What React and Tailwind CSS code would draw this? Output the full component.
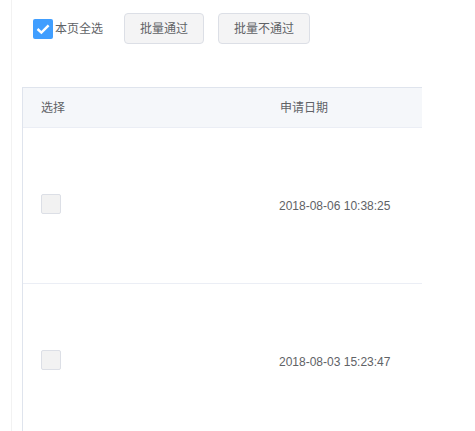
import React, { useState } from "react";

const rows = [
  { id: 1, date: "2018-08-06 10:38:25" },
  { id: 2, date: "2018-08-03 15:23:47" },
];

function Check({ checked, onClick }) {
  return checked ? (
    <span
      onClick={onClick}
      className="flex h-[20px] w-[20px] shrink-0 items-center justify-center rounded-[2px] bg-[#409eff]"
    >
      <svg width="16" height="16" viewBox="0 0 16 16">
        <path d="M2.5 8 L6.4 11.6 L13.6 4.4" fill="none" stroke="#fff" strokeWidth="2.4" />
      </svg>
    </span>
  ) : (
    <span
      onClick={onClick}
      className="block h-[20px] w-[20px] shrink-0 rounded-[2px] border border-[#dcdfe6] bg-[#f2f2f2]"
    />
  );
}

export default function App() {
  const [all, setAll] = useState(true);
  const [sel, setSel] = useState([]);

  return (
    <div
      className="min-h-[431px] bg-white text-[12px] text-[#606266]"
      style={{ fontFamily: '"Liberation Sans", "Noto Sans CJK SC", sans-serif' }}
    >
      <div className="ml-[11px] min-h-[431px] border-l border-[#f2f2f2] pl-[10px]">
        {/* toolbar */}
        <div className="flex items-center pt-[13px] pl-[11px]">
          <label className="flex items-center gap-[2px]">
            <Check checked={all} onClick={() => setAll(!all)} />
            <span>本页全选</span>
          </label>
          <button className="ml-[21px] h-[31px] w-[80px] rounded-[4px] border border-[#dcdfe6] bg-[#f4f4f5]">
            批量通过
          </button>
          <button className="ml-[14px] h-[31px] w-[92px] rounded-[4px] border border-[#dcdfe6] bg-[#f4f4f5]">
            批量不通过
          </button>
        </div>

        {/* table */}
        <div className="mt-[43px] w-[400px] border-l border-t border-[#dfe4ed]">
          <div className="flex h-[40px] items-center border-b border-[#ebeef5] bg-[#f5f7fa]">
            <div className="w-[238px] pl-[18px]">选择</div>
            <div className="pl-[19px]">申请日期</div>
          </div>
          {rows.map((r) => (
            <div key={r.id} className="flex h-[156px] items-center border-b border-[#ebeef5]">
              <div className="w-[238px] pl-[18px] pb-[3px]">
                <Check
                  checked={sel.includes(r.id)}
                  onClick={() =>
                    setSel((s) => (s.includes(r.id) ? s.filter((x) => x !== r.id) : [...s, r.id]))
                  }
                />
              </div>
              <div className="pl-[18px]">{r.date}</div>
            </div>
          ))}
        </div>
      </div>
    </div>
  );
}
